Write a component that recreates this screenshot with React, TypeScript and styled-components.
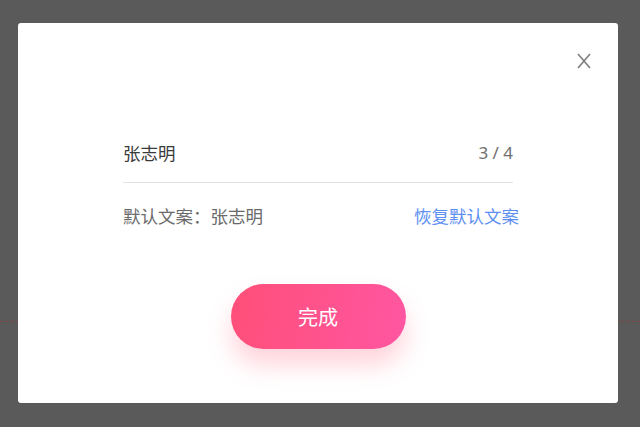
import React from "react";
import styled, { createGlobalStyle } from "styled-components";

const Global = createGlobalStyle`
  html, body { margin: 0; padding: 0; }
  body {
    font-family: "Noto Sans CJK SC", "Noto Sans", sans-serif;
    background: #5a5a5a;
  }
`;

const Page = styled.div`
  position: relative;
  width: 640px;
  height: 427px;
  background: #5a5a5a;
  overflow: hidden;
  display: flex;
  align-items: flex-start;
  justify-content: flex-start;
  padding: 23px 0 0 18px;
  box-sizing: border-box;
`;

const Guide = styled.div`
  position: absolute;
  left: 0;
  right: 0;
  top: 321px;
  border-top: 1px dashed #7a4646;
`;

const Modal = styled.div`
  position: relative;
  width: 600px;
  height: 380px;
  background: #ffffff;
  border-radius: 3px;
  box-sizing: border-box;
  padding: 118px 105px 0;
  display: flex;
  flex-direction: column;
`;

const Close = styled.button`
  position: absolute;
  top: 30px;
  right: 27px;
  width: 14px;
  height: 16px;
  padding: 0;
  border: 0;
  background: transparent;
  cursor: pointer;
  display: flex;
`;

const Field = styled.div`
  display: flex;
  align-items: center;
  justify-content: space-between;
  line-height: 24px;
  padding-bottom: 17px;
  border-bottom: 1.5px solid #e2e2e2;
`;

const Value = styled.span`
  font-size: 17.5px;
  color: #3a3a3a;
`;

const Counter = styled.span`
  font-family: "Noto Sans", sans-serif;
  font-size: 17px;
  color: #6e6e6e;
`;

const DefaultRow = styled.div`
  display: flex;
  align-items: center;
  justify-content: space-between;
  line-height: 24px;
  margin-top: 21px;
  margin-right: -6px;
`;

const DefaultText = styled.span`
  font-size: 17.5px;
  color: #6a6a6a;
`;

const Restore = styled.a`
  font-size: 17.5px;
  color: #5d8ff2;
  cursor: pointer;
`;

const Done = styled.button`
  align-self: center;
  margin-top: 56px;
  width: 175px;
  height: 65px;
  border: 0;
  border-radius: 33px;
  background: linear-gradient(100deg, #ff4f78 0%, #ff56a2 100%);
  box-shadow: 0 16px 24px rgba(255, 100, 130, 0.28);
  color: #ffffff;
  font-family: "Noto Sans CJK SC", sans-serif;
  font-size: 20px;
  cursor: pointer;
`;

export default function App() {
  return (
    <Page>
      <Global />
      <Guide />
      <Modal>
        <Close aria-label="close">
          <svg width="14" height="16" viewBox="0 0 14 16">
            <path d="M1 1 L13 15 M13 1 L1 15" stroke="#808080" strokeWidth="1.7" fill="none" />
          </svg>
        </Close>
        <Field>
          <Value>张志明</Value>
          <Counter>3 / 4</Counter>
        </Field>
        <DefaultRow>
          <DefaultText>默认文案：张志明</DefaultText>
          <Restore>恢复默认文案</Restore>
        </DefaultRow>
        <Done>完成</Done>
      </Modal>
    </Page>
  );
}
